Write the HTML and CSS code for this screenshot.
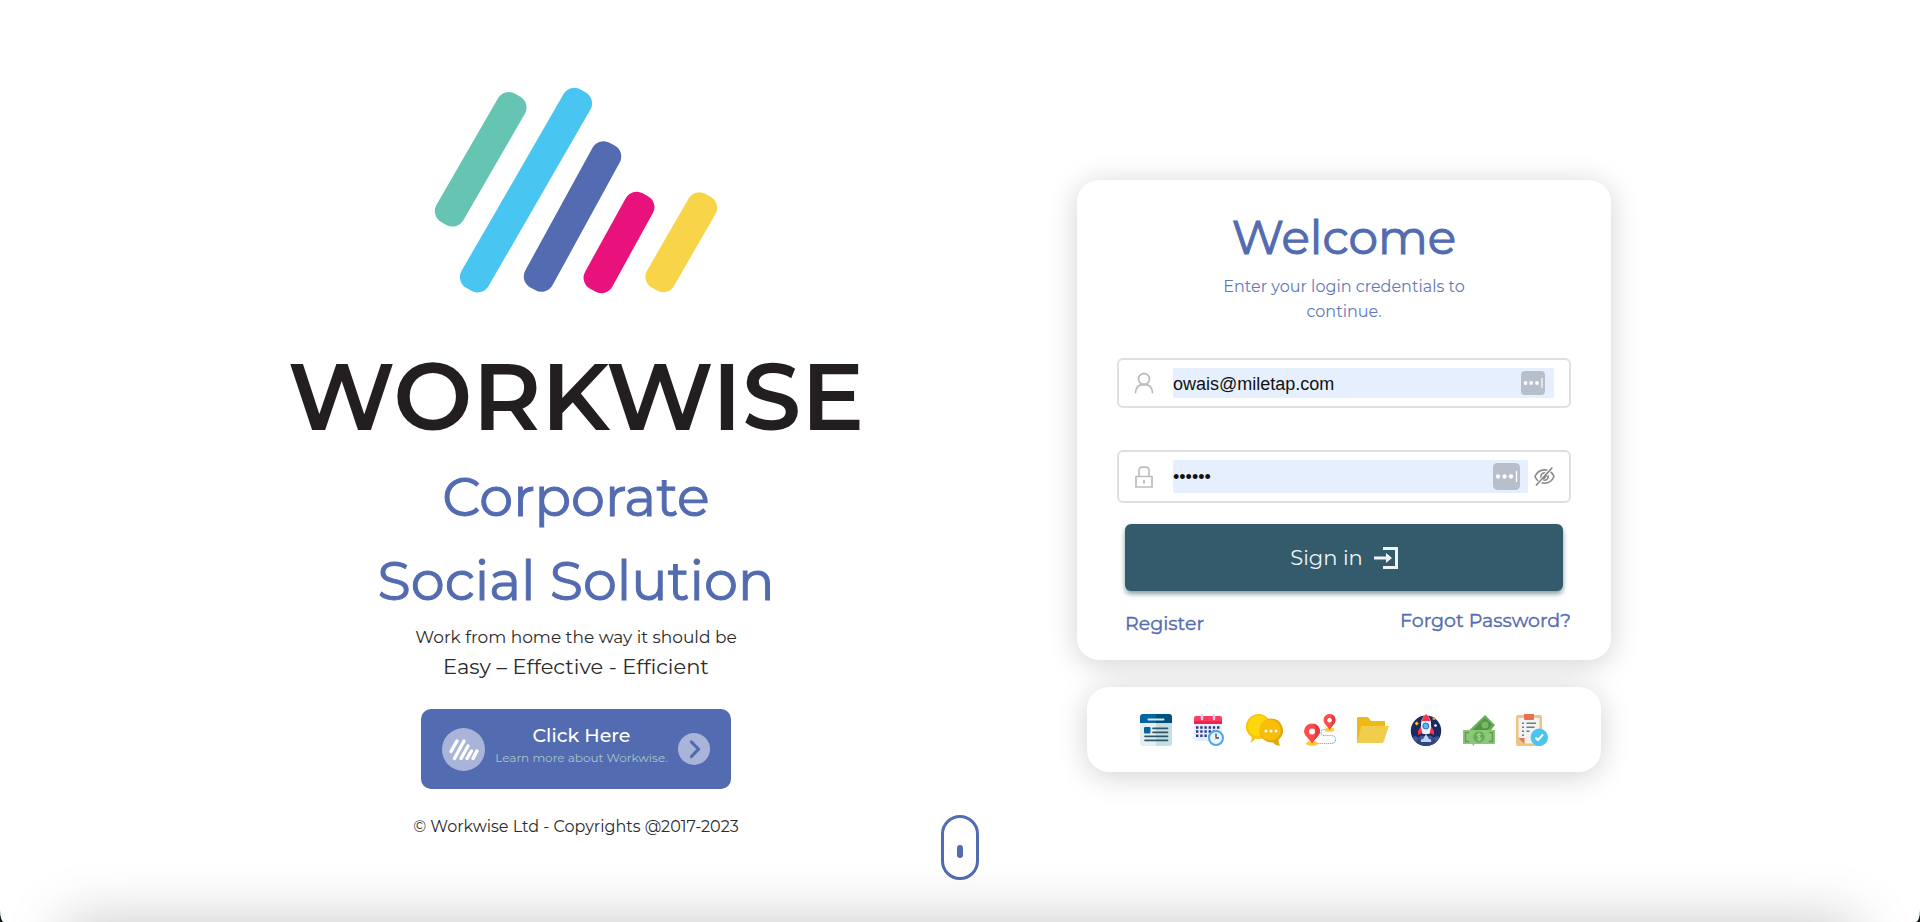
FILE: index.html
```html
<!DOCTYPE html>
<html lang="en">
<head>
<meta charset="utf-8">
<title>Workwise</title>
<link rel="stylesheet" href="styles.css">
</head>
<body>
<div class="page">
  <main class="layout">
    <section class="brand">
      <svg class="brand-mark" viewBox="0 0 284 206" aria-hidden="true">
        <rect x="-15.500" y="-74" width="31" height="148" rx="12.500" fill="#66c4b2" transform="translate(46.700 71.300) rotate(30)"/>
        <rect x="-15.500" y="-114.500" width="31" height="229" rx="12.500" fill="#48c5f0" transform="translate(92 102.200) rotate(30)"/>
        <rect x="-15.500" y="-82.500" width="31" height="165" rx="12.500" fill="#536bb0" transform="translate(138.500 128.500) rotate(28.700)"/>
        <rect x="-15.500" y="-54.500" width="31" height="109" rx="12.500" fill="#e9127d" transform="translate(185 154.400) rotate(28.900)"/>
        <rect x="-15.500" y="-54" width="31" height="108" rx="12.500" fill="#f8d448" transform="translate(247.300 154.200) rotate(30)"/>
      </svg>
      <div class="wordmark">WORKWISE</div>
      <h1 class="headline">Corporate<br>Social Solution</h1>
      <p class="tagline">Work from home the way it should be</p>
      <p class="motto">Easy – Effective - Efficient</p>
      <a class="promo" href="#about">
        <svg class="promo-logo" viewBox="0 0 43 43" aria-hidden="true">
          <circle cx="21.500" cy="21.500" r="21.500" fill="#a9b4d9"/>
          <g stroke="#fff" stroke-width="3.400" stroke-linecap="round">
            <path d="M9 23.500 15 13M12.500 30.500 22 13M19 30.500 26 18M25 30.500 29.500 23M31 30.500 35 23"/>
          </g>
        </svg>
        <span class="promo-text">
          <span class="promo-title">Click Here</span>
          <span class="promo-note">Learn more about Workwise.</span>
        </span>
        <svg class="promo-arrow" viewBox="0 0 32 32" aria-hidden="true">
          <circle cx="16" cy="16" r="16" fill="#a9b4d9"/>
          <path d="M13.500 9 20.500 16.200 13.500 23.500" fill="none" stroke="#536bb0" stroke-width="3.200" stroke-linecap="round" stroke-linejoin="round"/>
        </svg>
      </a>
      <p class="copyright">© Workwise Ltd - Copyrights @2017-2023</p>
    </section>

    <section class="access">
      <form class="card login">
        <h2 class="welcome">Welcome</h2>
        <p class="hint">Enter your login credentials to continue.</p>
        <div class="field">
          <svg class="field-icon" viewBox="0 0 20 22" fill="none" stroke="#bdbdbd" stroke-width="1.800" stroke-linecap="round" aria-hidden="true">
            <circle cx="10" cy="7" r="5.500"/><path d="M1.500 20.500c.3-5 3.500-8 8.500-8s8.200 3 8.500 8"/>
          </svg>
          <span class="entry">
            <input class="control" type="email" aria-label="Email" value="owais@miletap.com">
            <svg class="autofill" viewBox="0 0 24 24" aria-hidden="true"><rect width="24" height="24" rx="4" fill="#b7bfca"/><g fill="#fff"><circle cx="4.500" cy="12" r="1.900"/><circle cx="10.200" cy="12" r="1.900"/><circle cx="16" cy="12" r="1.900"/><path d="M20.300 7h1.200v10h-1.200z"/></g></svg>
          </span>
        </div>
        <div class="field field-password">
          <svg class="field-icon" viewBox="0 0 20 22" fill="none" stroke="#bdbdbd" stroke-width="1.700" aria-hidden="true">
            <path d="M2 10.500h16v10.500H2zM5 10.500V5q0-3.800 3-3.800h4q3 0 3 3.800v5.500"/><path d="M10 14v3.500" stroke-width="2"/>
          </svg>
          <span class="entry">
            <input class="control" type="password" aria-label="Password" value="secret">
            <svg class="autofill" viewBox="0 0 24 24" aria-hidden="true"><rect width="24" height="24" rx="4" fill="#b7bfca"/><g fill="#fff"><circle cx="4.500" cy="12" r="1.900"/><circle cx="10.200" cy="12" r="1.900"/><circle cx="16" cy="12" r="1.900"/><path d="M20.300 7h1.200v10h-1.200z"/></g></svg>
          </span>
          <button class="reveal" type="button" aria-label="Show password">
            <svg viewBox="0 0 22 20" fill="none" stroke="#8a8a8a" stroke-width="1.700" stroke-linecap="round" aria-hidden="true">
              <path d="M1 10c2-4.600 5.500-7 10-7s8 2.400 10 7c-2 4.600-5.500 7-10 7S3 14.600 1 10z"/><circle cx="11" cy="10" r="3.800"/><path d="M18.500 1 3 19" stroke="#fff" stroke-width="4"/><path d="M18.700 1.200 2.500 18.800M10 12.500l3-3.500"/>
            </svg>
          </button>
        </div>
        <button class="sign-in" type="button">Sign in
          <svg class="sign-in-icon" viewBox="0 0 24 22" fill="#f1f4f5" aria-hidden="true"><path d="M9 0h15v22H9v-3h12V3H9zM0 9.500h12V6l6 5-6 5v-3.500H0z"/></svg>
        </button>
        <div class="links">
          <a class="link link-register" href="#register">Register</a>
          <a class="link" href="#forgot">Forgot Password?</a>
        </div>
      </form>

      <nav class="card tools" aria-label="Tools">
        <a class="tool" href="#news" aria-label="News"><svg viewBox="0 0 32 32">
          <rect width="32" height="32" rx="3" fill="#e6eeef"/><path d="M16 0h13a3 3 0 0 1 3 3v26a3 3 0 0 1-3 3H16z" fill="#c6dde2"/>
          <path d="M0 9V3a3 3 0 0 1 3-3h13v9z" fill="#0067a3"/><path d="M16 0h13a3 3 0 0 1 3 3v6H16z" fill="#00517f"/>
          <path d="M8.500 5.500h15" stroke="#d9e8ef" stroke-width="2" stroke-linecap="round"/><rect x="4" y="13" width="6.500" height="6.500" rx="1" fill="#0067a3"/>
          <path d="M13 14.300h14.500M13 18.300h14.500M5 22.300h22.500M5 26.300h22.500" stroke="#2c5669" stroke-width="1.700" stroke-linecap="round"/></svg></a>
        <a class="tool" href="#calendar" aria-label="Calendar"><svg viewBox="0 0 32 32">
          <path d="M1 9h28v16a2 2 0 0 1-2 2H3a2 2 0 0 1-2-2z" fill="#e8edfb"/><path d="M1 10V4a2 2 0 0 1 2-2h24a2 2 0 0 1 2 2v6z" fill="#ff3b5f"/><path d="M1 7h28v3H1z" fill="#f0244d"/>
          <path d="M9 1v4M21 1v4" stroke="#d5dbf5" stroke-width="2.400" stroke-linecap="round"/>
          <path d="M3 13.500h24M3 17.500h22M3 21.700h13" stroke="#2b3a86" stroke-width="2.400" stroke-dasharray="2.400 1.800"/>
          <circle cx="23" cy="24" r="7" fill="#eaf6ff" stroke="#4aa6ef" stroke-width="2"/><path d="M23 19.500V24h3" fill="none" stroke="#33427f" stroke-width="1.300"/><path d="M23 24l-1.500 1.500" stroke="#fdbf2d" stroke-width="1.500"/></svg></a>
        <a class="tool tool-wide" href="#chat" aria-label="Chat"><svg viewBox="0 0 37 32">
          <path d="M12.500 0a12.500 12.500 0 0 1 0 25q-2 0-3-.4Q8 27.500 4 28.500q2-2.500 1.600-5.500A12.500 12.500 0 0 1 12.500 0z" fill="#f6c508"/><circle cx="12.500" cy="12" r="10.500" fill="#ffd60e"/>
          <path d="M25 4.500a12 12 0 0 1 7.500 21.300q0 3 1.500 6-5-.5-7-3.400A12 12 0 1 1 25 4.500z" fill="#e2a900"/><circle cx="24.300" cy="16" r="10.500" fill="#f9bd0b"/>
          <g fill="#fff"><circle cx="20" cy="17" r="1.500"/><circle cx="25" cy="17" r="1.500"/><circle cx="30" cy="17" r="1.500"/></g></svg></a>
        <a class="tool" href="#routes" aria-label="Routes"><svg viewBox="0 0 32 32">
          <path d="M24 15.500h-4q-3 0-3 3t3 3h7q4.500 0 4.500 4t-4.500 4H14" fill="none" stroke="#5cb8ea" stroke-width="1.100" stroke-dasharray="1.300 .8"/>
          <ellipse cx="8" cy="29.500" rx="6" ry="2.500" fill="#ffca36"/><ellipse cx="25.500" cy="15.700" rx="5" ry="2" fill="#ffca36"/>
          <path d="M8 29.500C5 24.500 0 21 0 17.500a8 8 0 0 1 16 0c0 3.500-5 7-8 12zM25.500 16c-2-4-6-6.500-6-10a6 6 0 0 1 12 0c0 3.500-4 6-6 10z" fill="#ff4b4c"/>
          <path d="M8 29.500c3-5 8-8.500 8-12a8 8 0 0 0-6-7.700q4 8-2 19.700zM25.500 16c2-4 6-6.500 6-10a6 6 0 0 0-4.500-5.800q3 7-1.500 15.800z" fill="#e6393f"/>
          <circle cx="8" cy="17.500" r="3" fill="#fff"/><circle cx="25.500" cy="6.300" r="2.300" fill="#fff"/></svg></a>
        <a class="tool" href="#files" aria-label="Files"><svg viewBox="0 0 32 32">
          <path d="M0 4q0-1 1-1h10l3 4h14v8H8L1 29H0z" fill="#ebba16"/><path d="M5.500 12H32l-5.500 16q-.3 1-1.300 1H0L4 13q.3-1 1.500-1z" fill="#f0cd4a"/></svg></a>
        <a class="tool" href="#launch" aria-label="Launch"><svg viewBox="0 0 32 32">
          <circle cx="16" cy="16.800" r="15.200" fill="#1d2a5e"/><path d="M2.200 23q4-2 6.300 1 2-3 5-2h5q3-1 5 2 3-3 6.300-1a15.200 15.200 0 0 1-27.600 0z" fill="#42549a"/><path d="M6 28q2-4 6-3 4-2 8 0 4-1 6 3a15.200 15.200 0 0 1-20 0z" fill="#33447f"/>
          <path d="M16 20l-3 5q-3 0-2 3h10q1-3-2-3z" fill="#b9d5fa"/><path d="M11 12l-3 5v4l4-2h8l4 2v-4l-3-5z" fill="#ff3047"/>
          <path d="M16 0q6 5 5 13l-1.500 7h-7L11 13Q10 5 16 0z" fill="#edf2ff"/><path d="M16 0q3.500 3 4.500 7h-9Q12.500 3 16 0z" fill="#ff3047"/><circle cx="15.800" cy="12" r="3" fill="#55b7f5" stroke="#2b6eaa"/>
          <path d="M5 9.500h3.500M6.700 7.800v3.500" stroke="#fdc72d" stroke-width="1.500"/><circle cx="25.500" cy="11.500" r="1.300" fill="#fff"/><circle cx="24" cy="4.500" r="1.500" fill="#ef9636"/></svg></a>
        <a class="tool" href="#pay" aria-label="Pay"><svg viewBox="0 0 32 32">
          <path d="M5.500 17 22 1l10 10-7 9H8z" fill="#69ad57"/><path d="M10 16 22 4l7 7-5 6z" fill="#4e9442"/><circle cx="22" cy="11" r="3.500" fill="#76b962"/>
          <path d="M0 16h32v14H11.500l-1 2-1.500-2H0z" fill="#8ac777"/><path d="M6 18.500H2.500v9H6M26 18.500h3.500v9H26" fill="none" stroke="#5d9e4e" stroke-width="1.400"/>
          <circle cx="16" cy="23" r="5.700" fill="#66ab55"/><path d="M18 20.600q-4-1.500-4 .7c0 2 4 1.200 4 3.300s-4 1.200-4 .2M16 18.800v8.400" fill="none" stroke="#a9dc93"/></svg></a>
        <a class="tool" href="#tasks" aria-label="Tasks"><svg viewBox="0 0 32 32">
          <rect y="1" width="26" height="31" rx="2" fill="#ecc583"/><path d="M2.500 4h21v25.500H8.500L2.500 23z" fill="#f2f2f0"/><path d="M2.500 24h6v6z" fill="#e8735c"/>
          <path d="M8 0h10v5q0 1-1 1H9q-1 0-1-1z" fill="#e96f56"/>
          <path d="M6 9.300h2M6 13.300h2M6 17.300h2M6 21.300h2M10.500 9.300h9.500M10.500 13.300h8M10.500 17.300h3" stroke="#5e8290" stroke-width="1.500"/>
          <circle cx="23.300" cy="23.300" r="8.700" fill="#49c5ef"/><path d="M19.500 23.700l2.500 2.300 5-5.500" fill="none" stroke="#fff" stroke-width="2"/></svg></a>
      </nav>
    </section>
  </main>
  <a class="scroll-cue" href="#more" aria-label="Scroll down"><span class="scroll-wheel"></span></a>
  <div class="next-edge"></div>
</div>
</body>
</html>
```
FILE: styles.css
```css
* { box-sizing: border-box; }
html { background: #0b1616; }
body {
  margin: 0;
  font-family: Montserrat, Inter, "Liberation Sans", sans-serif;
  color: #2b2b2b;
}
h1, h2, p { margin: 0; font-weight: 400; }
a { text-decoration: none; color: inherit; }
svg { display: block; }

.page {
  position: relative;
  min-height: 100vh;
  overflow: hidden;
  background: #fff;
  border-radius: 0 0 4px 4px / 0 0 12px 12px;
}
.layout {
  display: grid;
  grid-template-columns: 1fr 1fr;
  width: 80%;
  margin: 0 auto;
}

.brand {
  display: flex;
  flex-direction: column;
  align-items: center;
  padding-top: 88px;
  text-align: center;
}
.brand-mark { width: 284px; overflow: visible; }
.wordmark {
  margin-top: 45px;
  font-size: 94px;
  line-height: 116px;
  font-weight: 600;
  color: #231f20;
}
.headline {
  font-size: 54px;
  line-height: 84px;
  color: #536bb0;
  -webkit-text-stroke: 1px #536bb0;
}
.tagline { font-size: 17px; line-height: 28px; }
.motto { font-size: 21px; line-height: 32px; }
.promo {
  display: flex;
  align-items: center;
  justify-content: space-between;
  width: 310px;
  height: 80px;
  margin-top: 26px;
  padding: 0 21px;
  border-radius: 10px;
  background: #536bb0;
  color: #fff;
}
.promo-logo { width: 43px; }
.promo-arrow { width: 32px; }
.promo-text { display: flex; flex-direction: column; padding-bottom: 8px; }
.promo-title { font-size: 19px; line-height: 26px; font-weight: 500; }
.promo-note { font-size: 12px; line-height: 18px; color: #a9c4cb; }
.copyright { margin-top: 26px; font-size: 16px; line-height: 24px; }

.access {
  display: flex;
  flex-direction: column;
  align-items: center;
  gap: 27px;
  padding-top: 180px;
}
.card { border-radius: 22px; background: #fff; box-shadow: 0 4px 30px rgba(0, 0, 0, .18); }
.login {
  display: flex;
  flex-direction: column;
  width: 534px;
  padding: 28px 40px 24px;
}
.welcome {
  font-size: 47px;
  line-height: 60px;
  text-align: center;
  color: #536bb0;
  -webkit-text-stroke: 1px #536bb0;
}
.hint {
  width: 260px;
  margin: 6px auto 34px;
  font-size: 16px;
  line-height: 25px;
  text-align: center;
  color: #6279ba;
}
.field {
  display: flex;
  align-items: center;
  height: 50px;
  padding: 0 15px;
  border: 2px solid #dfdfdf;
  border-radius: 6px;
}
.field-password { height: 53px; margin: 42px 0 21px; padding-right: 14px; }
.field-icon { width: 20px; margin-right: 19px; }
.entry {
  display: flex;
  flex: 1;
  align-items: center;
  height: 30px;
  padding-right: 9px;
  border-radius: 2px;
  background: #e6effe;
}
.control {
  flex: 1;
  min-width: 0;
  padding: 2px 0 0;
  border: 0;
  outline: 0;
  background: none;
  font-family: "Liberation Sans", Arial, sans-serif;
  font-size: 18px;
  color: #111;
}
.autofill { width: 24px; }
.field-password .entry { height: 33px; padding-right: 8px; }
.field-password .autofill { width: 27px; }
.reveal { margin-left: 6px; padding: 0; border: 0; background: none; }
.reveal svg { width: 21px; }
.sign-in {
  display: flex;
  align-items: center;
  justify-content: center;
  gap: 11px;
  height: 67px;
  margin: 0 8px;
  border: 0;
  border-radius: 6px;
  background: #335b6c;
  box-shadow: 0 3px 5px rgba(51, 91, 108, .6);
  font-family: inherit;
  font-size: 21px;
  color: #f1f4f5;
}
.sign-in-icon { width: 24px; }
.links {
  display: flex;
  justify-content: space-between;
  align-items: flex-start;
  margin-top: 18px;
  padding-left: 8px;
}
.link {
  font-size: 19px;
  line-height: 24px;
  color: #536bb0;
  -webkit-text-stroke: 1px #536bb0;
  -webkit-text-stroke-width: thin;
}
.link-register { padding-top: 3px; }

.tools {
  display: flex;
  align-items: center;
  justify-content: center;
  gap: 21px;
  width: 514px;
  height: 85px;
}
.tool { width: 32px; }
.tool-wide { width: 37px; }

.scroll-cue {
  position: absolute;
  bottom: 42px;
  left: 50%;
  display: flex;
  align-items: center;
  justify-content: center;
  width: 38px;
  height: 65px;
  margin-left: -19px;
  padding-top: 8px;
  border: 3px solid #536bb0;
  border-radius: 19px;
}
.scroll-wheel { width: 6px; height: 13px; border-radius: 3px; background: #536bb0; }
.next-edge {
  position: absolute;
  top: 100%;
  left: 64px;
  right: 64px;
  height: 80px;
  box-shadow: 0 0 60px rgba(0, 0, 0, .22);
}
```
